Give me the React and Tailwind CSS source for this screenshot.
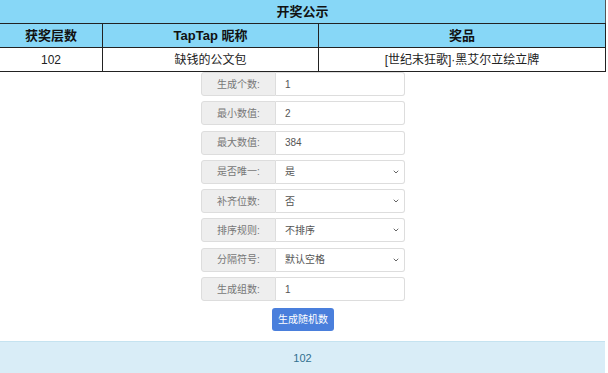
import { ChevronDown } from "lucide-react";

const fields = [
    { label: "生成个数:", value: "1" },
    { label: "最小数值:", value: "2" },
    { label: "最大数值:", value: "384" },
    { label: "是否唯一:", value: "是", select: true },
    { label: "补齐位数:", value: "否", select: true },
    { label: "排序规则:", value: "不排序", select: true },
    { label: "分隔符号:", value: "默认空格", select: true },
    { label: "生成组数:", value: "1" },
];

export default function App() {
    return (
        <div
            className="h-[373px] w-[608px] overflow-hidden bg-white"
            style={{ fontFamily: '"Liberation Sans", "Noto Sans CJK SC", sans-serif' }}
        >
            <div className="w-[606px]">
                <div className="flex h-[23px] items-center justify-center border-r border-[#555] bg-[#87d7f7] text-[13px] font-bold text-[#111]">
                    开奖公示
                </div>
                <div className="flex h-[25px] border-y border-r border-[#222] bg-[#87d7f7] text-[13px] font-bold text-[#111]">
                    <div className="flex w-[103px] items-center justify-center border-r border-[#222]">获奖层数</div>
                    <div className="flex w-[216px] items-center justify-center border-r border-[#222]">TapTap 昵称</div>
                    <div className="flex flex-1 items-center justify-center">奖品</div>
                </div>
                <div className="flex h-[24px] border-b border-r border-[#222] text-[12px] text-[#222]">
                    <div className="flex w-[103px] items-center justify-center border-r border-[#222]">102</div>
                    <div className="flex w-[216px] items-center justify-center border-r border-[#222]">缺钱的公文包</div>
                    <div className="flex flex-1 items-center justify-center">[世纪末狂歌]·黑艾尔立绘立牌</div>
                </div>
            </div>

            <div className="flex w-[606px] flex-col items-center gap-[5.3px]">
                {fields.map((f) => (
                    <div key={f.label} className="flex h-[24px] w-[204px] text-[10px]">
                        <div className="flex w-[75px] items-center justify-center rounded-l-[3px] border border-[#ddd] bg-[#eee] text-[#777]">
                            {f.label}
                        </div>
                        <div className="flex flex-1 items-center justify-between rounded-r-[3px] border border-l-0 border-[#ddd] bg-white pl-[9px] pr-[4px] text-[#555]">
                            <span>{f.value}</span>
                            {f.select && <ChevronDown className="h-[8px] w-[8px] text-[#666]" strokeWidth={3} />}
                        </div>
                    </div>
                ))}
                <button className="mt-[1.5px] h-[23px] w-[62px] rounded-[3px] bg-[#4a7fdc] text-[10px] text-white">
                    生成随机数
                </button>
            </div>

            <div className="mt-[10px] flex h-[34px] w-[605px] items-center justify-center border-t border-[#c5e3f0] bg-[#d9edf7] text-[11px] text-[#31708f]">
                102
            </div>
        </div>
    );
}
